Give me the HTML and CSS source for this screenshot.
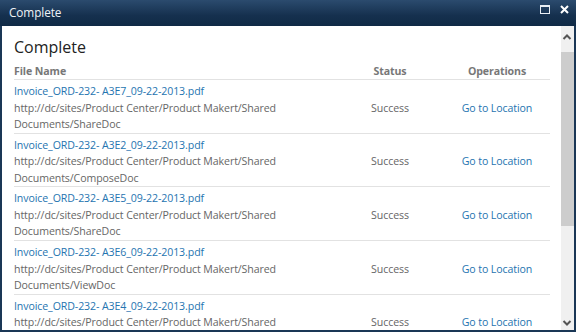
FILE: index.html
```html
<!DOCTYPE html>
<html>
<head>
<meta charset="utf-8">
<link rel="stylesheet" href="styles.css">
</head>
<body>
<div class="window">
  <div class="titlebar">
    <span class="title">Complete</span>
    <span class="controls">
      <svg class="max" width="10" height="9" viewBox="0 0 10 9"><rect x="0.5" y="0.5" width="9" height="8" fill="none" stroke="#e8eef4" stroke-width="1"/><rect x="0" y="0" width="10" height="2" fill="#e8eef4"/></svg>
      <svg class="close" width="9" height="9" viewBox="0 0 9 9"><path d="M1 1 L8 8 M8 1 L1 8" stroke="#ffffff" stroke-width="2"/></svg>
    </span>
  </div>
  <div class="frame">
    <div class="content">
      <h1 class="heading">Complete</h1>
      <div class="grid">
        <div class="th th-name">File Name</div>
        <div class="th th-center">Status</div>
        <div class="th th-center">Operations</div>

        <div class="cell name"><a class="link">Invoice_ORD-232- A3E7_09-22-2013.pdf</a><span>http://dc/sites/Product Center/Product Makert/Shared</span><span>Documents/ShareDoc</span></div>
        <div class="cell status">Success</div>
        <div class="cell ops"><a class="link">Go to Location</a></div>

        <div class="cell name"><a class="link">Invoice_ORD-232- A3E2_09-22-2013.pdf</a><span>http://dc/sites/Product Center/Product Makert/Shared</span><span>Documents/ComposeDoc</span></div>
        <div class="cell status">Success</div>
        <div class="cell ops"><a class="link">Go to Location</a></div>

        <div class="cell name"><a class="link">Invoice_ORD-232- A3E5_09-22-2013.pdf</a><span>http://dc/sites/Product Center/Product Makert/Shared</span><span>Documents/ShareDoc</span></div>
        <div class="cell status">Success</div>
        <div class="cell ops"><a class="link">Go to Location</a></div>

        <div class="cell name"><a class="link">Invoice_ORD-232- A3E6_09-22-2013.pdf</a><span>http://dc/sites/Product Center/Product Makert/Shared</span><span>Documents/ViewDoc</span></div>
        <div class="cell status">Success</div>
        <div class="cell ops"><a class="link">Go to Location</a></div>

        <div class="cell name last"><a class="link">Invoice_ORD-232- A3E4_09-22-2013.pdf</a><span>http://dc/sites/Product Center/Product Makert/Shared</span></div>
        <div class="cell status last">Success</div>
        <div class="cell ops last"><a class="link">Go to Location</a></div>
      </div>
    </div>
    <div class="scrollbar">
      <svg class="arrow" width="12" height="14" viewBox="0 0 12 14"><path d="M2.5 9 L6 5.5 L9.5 9" fill="none" stroke="#555" stroke-width="2"/></svg>
      <div class="track"><div class="thumb"></div></div>
      <svg class="arrow" width="12" height="14" viewBox="0 0 12 14"><path d="M2.5 5 L6 8.5 L9.5 5" fill="none" stroke="#555" stroke-width="2"/></svg>
    </div>
  </div>
</div>
</body>
</html>
```
FILE: styles.css
```css
* { box-sizing: border-box; }
html, body { margin: 0; padding: 0; }
body {
  width: 576px;
  height: 332px;
  overflow: hidden;
  background: #1c3a5c;
  font-family: "Open Sans", "Noto Sans", sans-serif;
}
.window {
  width: 576px;
  height: 332px;
  display: flex;
  flex-direction: column;
  background: #1a3756;
  padding: 0 2px 2px 2px;
}
.titlebar {
  height: 26px;
  flex: none;
  display: flex;
  align-items: center;
  justify-content: space-between;
  padding: 0 7px 2px 9px;
  background: linear-gradient(#2b4b6e, #15304e 60%, #102a46);
  margin: 0 -2px;
}
.title {
  color: #eef2f6;
  font-size: 11.8px;
  letter-spacing: -0.1px;
}
.controls {
  display: flex;
  align-items: center;
  gap: 10px;
  padding-bottom: 6px;
}
.frame {
  flex: 1;
  display: flex;
  background: #ffffff;
  overflow: hidden;
  min-height: 0;
}
.content {
  flex: 1;
  padding: 10px 11px 0 12px;
  overflow: hidden;
}
.heading {
  margin: 0 0 5px 0;
  font-weight: normal;
  font-size: 16px;
  line-height: 22px;
  color: #222;
}
.grid {
  display: grid;
  grid-template-columns: 1fr 108px 106px;
  font-size: 10.6px;
  letter-spacing: -0.1px;
}
.th {
  font-weight: bold;
  color: #777;
  line-height: 16px;
  border-bottom: 1px solid #e2e2e2;
  height: 17px;
}
.th-center { text-align: center; }
.cell {
  border-bottom: 1px solid #e2e2e2;
  padding-top: 3px;
  line-height: 16.5px;
  height: 53.7px;
  color: #666;
}
.cell.last {
  height: 36px;
  border-bottom: none;
}
.status.last, .ops.last {
  padding-top: 19px;
  align-items: flex-start;
}
.name {
  display: flex;
  flex-direction: column;
  white-space: nowrap;
}
.status, .ops {
  display: flex;
  align-items: center;
  justify-content: center;
}
.link {
  color: #2574b0;
  text-decoration: none;
}
.scrollbar {
  width: 13px;
  flex: none;
  display: flex;
  flex-direction: column;
  background: #f0f0f0;
}
.arrow {
  flex: none;
  display: block;
  margin-top: 4px;
}
.track {
  flex: 1;
  padding-top: 8px;
}
.thumb {
  height: 174px;
  background: #cdcdcd;
}
```
